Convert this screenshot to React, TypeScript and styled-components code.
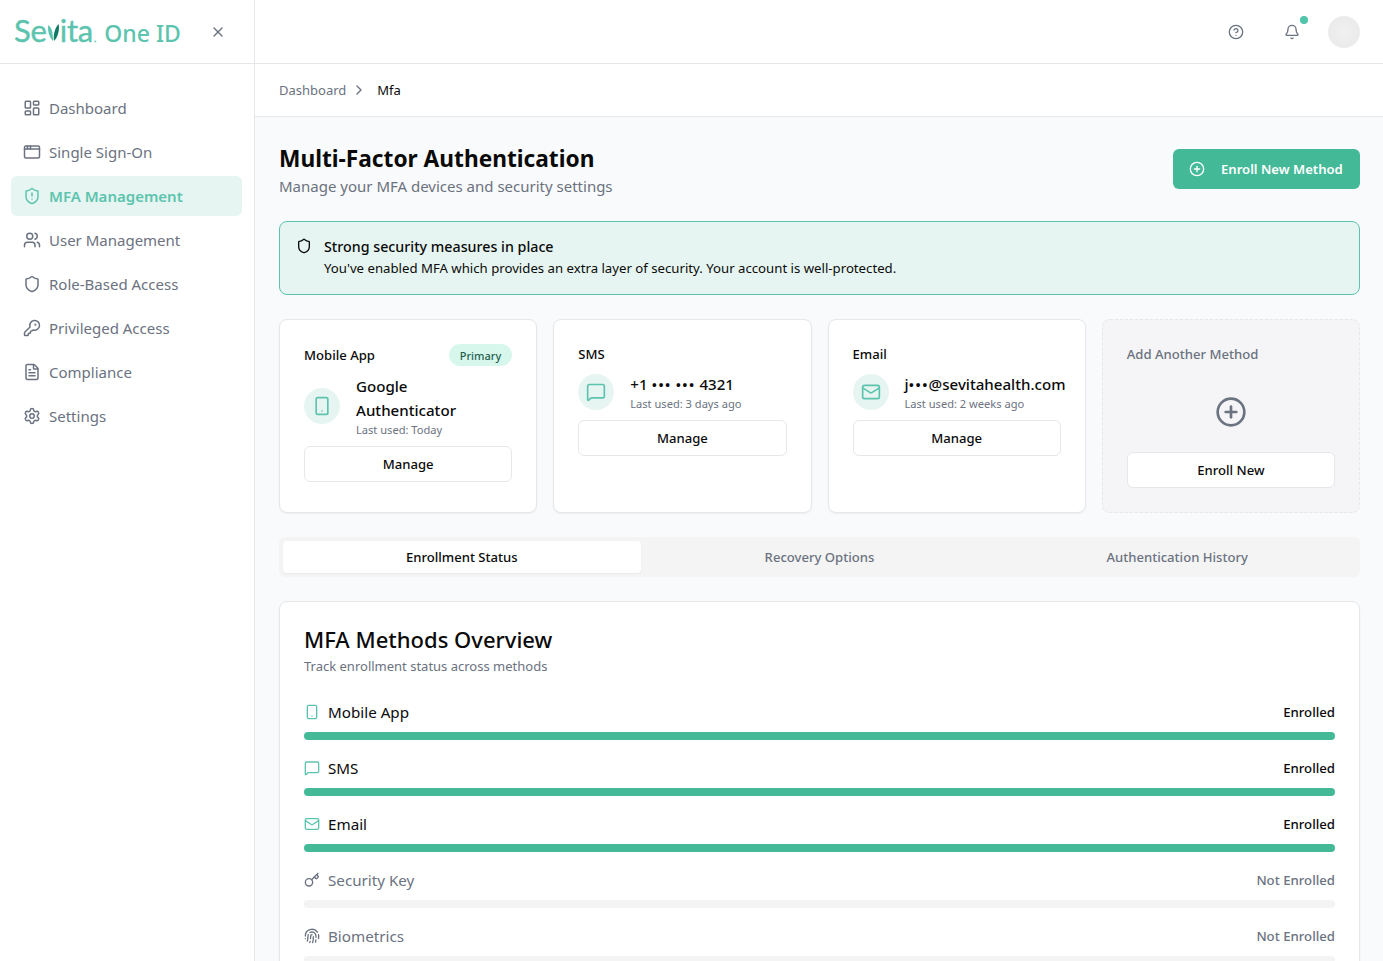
import React from "react";
import styled, { createGlobalStyle } from "styled-components";
import {
  LayoutDashboard, AppWindow, ShieldAlert, Users, Shield, KeyRound, FileText, Settings, X,
  CircleHelp, Bell, CirclePlus, Smartphone, MessageSquare, Mail, Key, Fingerprint, ChevronRight,
} from "lucide-react";

const Global = createGlobalStyle`
  html, body { margin: 0; padding: 0; height: 100%; overflow: hidden; }
  body { font-family: "Noto Sans", "Liberation Sans", sans-serif; color: #0a0a0a; background: #fff; }
  * { box-sizing: border-box; }
`;

const Shell = styled.div`display: flex; width: 100%; height: 961px; overflow: hidden;`;
const Sidebar = styled.aside`width: 255px; flex-shrink: 0; border-right: 1px solid #e5e7eb; background: #fff;`;
const Brand = styled.div`height: 64px; border-bottom: 1px solid #e5e7eb; display: flex; align-items: center; padding: 0 28px 0 14px; justify-content: space-between; color: #5cc4ae;`;
const Logo = styled.div`display: flex; align-items: baseline; gap: 8px; padding-top: 4px;`;
const Sevita = styled.span`font-family: Lato, sans-serif; font-weight: 400; font-size: 31px; letter-spacing: -0.2px; display: inline-flex; align-items: baseline; line-height: 32px; -webkit-text-stroke: 0.4px currentColor;`;
const LogoDot = styled.span`font-size: 10px; margin-left: 1px;`;
const Leaf = styled.svg`width: 13px; height: 19px; margin: 0 0 -1px 0;`;
const OneId = styled.span`font-size: 23px; font-weight: 500; line-height: 32px;`;
const CloseIcon = styled(X)`color: #6b7280;`;
const Nav = styled.nav`display: flex; flex-direction: column; gap: 4px; padding: 24px 12px 0 11px;`;
const NavItem = styled.a<{ $active?: boolean }>`
  height: 40px; display: flex; align-items: center; gap: 8px; padding-left: 12px; border-radius: 6px;
  font-size: 15px; line-height: 24px; color: ${(p) => (p.$active ? "#5cc4ae" : "#6b7280")};
  font-weight: ${(p) => (p.$active ? 600 : 400)};
  background: ${(p) => (p.$active ? "#e6f5f1" : "transparent")};
`;
const Main = styled.div`flex: 1; min-width: 0; display: flex; flex-direction: column; background: #f9fafb;`;
const TopBar = styled.header`height: 64px; flex-shrink: 0; background: #fff; border-bottom: 1px solid #e5e7eb; display: flex; align-items: center; justify-content: flex-end; padding-right: 23px;`;
const IconButton = styled.span`position: relative; width: 40px; height: 40px; display: flex; align-items: center; justify-content: center; color: #6b7280; margin-right: 16px;`;
const Dot = styled.span`position: absolute; width: 8px; height: 8px; border-radius: 50%; background: #4fc4ab; right: 4px; top: 4px;`;
const Avatar = styled.span`width: 32px; height: 32px; border-radius: 50%; background: radial-gradient(circle, #f0f0f0 0%, #e8e8e8 100%);`;
const Crumbs = styled.div`height: 53px; flex-shrink: 0; background: #fff; border-bottom: 1px solid #e5e7eb; display: flex; align-items: center; padding-left: 24px; font-size: 13px; color: #6b7280;`;
const CrumbSep = styled(ChevronRight)`margin: 0 10px 0 5px; color: #6b7280;`;
const CrumbCurrent = styled.span`color: #0a0a0a;`;
const Content = styled.main`padding: 27px 23px 0 24px; display: flex; flex-direction: column;`;
const PageHead = styled.div`display: flex; justify-content: space-between; align-items: flex-start; margin-bottom: 23px;`;
const Title = styled.h1`margin: 0; font-size: 22.7px; line-height: 29px; font-weight: 700;`;
const Sub = styled.p`margin: 1px 0 0; font-size: 15px; line-height: 24px; color: #6b7280;`;
const PrimaryButton = styled.button`
  height: 40px; width: 187px; border: 0; border-radius: 6px; background: #43b997; color: #fff; font: inherit;
  font-size: 13.1px; font-weight: 600; display: flex; align-items: center; gap: 16px; padding: 0 16px; white-space: nowrap; margin-top: 5px;
`;
const Alert = styled.section`height: 74px; border: 1px solid #5cc4ae; border-radius: 8px; background: #e6f5f1; display: flex; padding: 16px; gap: 12px; margin-bottom: 24px;`;
const AlertIcon = styled(Shield)`flex-shrink: 0; color: #0a0a0a;`;
const AlertTitle = styled.div`font-size: 14.25px; font-weight: 500; line-height: 17px;`;
const AlertText = styled.div`font-size: 13.2px; line-height: 20px; margin-top: 3px;`;
const Cards = styled.div`display: grid; grid-template-columns: repeat(4, minmax(0, 1fr)); gap: 16px; margin-bottom: 24px;`;
const Card = styled.div<{ $ghost?: boolean }>`
  border-radius: 8px; padding: 24px; height: 194px; display: flex; flex-direction: column;
  background: ${(p) => (p.$ghost ? "#f5f5f7" : "#fff")};
  border: 1px ${(p) => (p.$ghost ? "dashed" : "solid")} #e5e7eb;
  box-shadow: ${(p) => (p.$ghost ? "none" : "0 1px 2px rgba(0,0,0,.05)")};
`;
const CardHead = styled.div`display: flex; justify-content: space-between; align-items: center; margin-bottom: 8px; min-height: 20px;`;
const CardName = styled.div<{ $muted?: boolean }>`font-size: 13.1px; line-height: 20px; font-weight: 500; color: ${(p) => (p.$muted ? "#6b7280" : "#0a0a0a")};`;
const Badge = styled.span`height: 22px; border-radius: 11px; background: #d8f7ec; color: #1f5f50; font-size: 11px; font-weight: 500; padding: 0 11px; display: flex; align-items: center;`;
const MethodRow = styled.div`display: flex; align-items: center; gap: 16px; margin-bottom: 8px;`;
const IconCircle = styled.span`width: 36px; height: 36px; flex-shrink: 0; border-radius: 50%; background: #e6f5f1; color: #5cc4ae; display: flex; align-items: center; justify-content: center;`;
const MethodName = styled.div`font-size: 15.1px; line-height: 24px; font-weight: 500; max-width: 150px;`;
const Mask = styled.span`letter-spacing: 1px;`;
const Meta = styled.div`font-size: 11.1px; line-height: 16px; color: #6b7280;`;
const OutlineButton = styled.button`
  height: 36px; width: 100%; border: 1px solid #e5e7eb; border-radius: 6px; background: #fff; font: inherit; color: #0a0a0a;
  font-size: 13.1px; font-weight: 500; flex-shrink: 0;
`;
const PlusArea = styled.div`height: 80px; display: flex; align-items: center; justify-content: center; color: #6b7280;`;
const Tabs = styled.div`height: 40px; background: #f4f4f5; border-radius: 6px; padding: 4px; display: grid; grid-template-columns: repeat(3, 1fr); margin-bottom: 24px;`;
const Tab = styled.div<{ $active?: boolean }>`
  display: flex; align-items: center; justify-content: center; font-size: 13.1px; font-weight: 500; border-radius: 4px;
  color: ${(p) => (p.$active ? "#0a0a0a" : "#6b7280")};
  background: ${(p) => (p.$active ? "#fff" : "transparent")};
  box-shadow: ${(p) => (p.$active ? "0 1px 2px rgba(0,0,0,.05)" : "none")};
`;
const Panel = styled.section`background: #fff; border: 1px solid #e5e7eb; border-radius: 8px; padding: 24px; box-shadow: 0 1px 2px rgba(0,0,0,.05);`;
const PanelTitle = styled.h2`margin: 0; font-size: 22px; line-height: 27px; font-weight: 500;`;
const PanelSub = styled.p`margin: 3px 0 24px; font-size: 13px; line-height: 20px; color: #6b7280;`;
const Rows = styled.div`display: flex; flex-direction: column; gap: 16px;`;
const RowHead = styled.div`display: flex; justify-content: space-between; align-items: center; height: 24px; margin-bottom: 8px;`;
const RowLabel = styled.div<{ $on: boolean }>`display: flex; align-items: center; gap: 8px; font-size: 15.2px; color: ${(p) => (p.$on ? "#0a0a0a" : "#6b7280")}; svg { color: ${(p) => (p.$on ? "#5cc4ae" : "#6b7280")}; }`;
const RowState = styled.div<{ $on: boolean }>`font-size: 13.2px; font-weight: 500; color: ${(p) => (p.$on ? "#0a0a0a" : "#6b7280")};`;
const Track = styled.div`height: 8px; border-radius: 4px; background: #f4f4f5; overflow: hidden;`;
const Fill = styled.div`height: 100%; background: #43b997;`;

const navItems = [
  { label: "Dashboard", Icon: LayoutDashboard },
  { label: "Single Sign-On", Icon: AppWindow },
  { label: "MFA Management", Icon: ShieldAlert, active: true },
  { label: "User Management", Icon: Users },
  { label: "Role-Based Access", Icon: Shield },
  { label: "Privileged Access", Icon: KeyRound },
  { label: "Compliance", Icon: FileText },
  { label: "Settings", Icon: Settings },
];

const rows = [
  { label: "Mobile App", Icon: Smartphone, on: true },
  { label: "SMS", Icon: MessageSquare, on: true },
  { label: "Email", Icon: Mail, on: true },
  { label: "Security Key", Icon: Key, on: false },
  { label: "Biometrics", Icon: Fingerprint, on: false },
];

const methods = [
  { name: "Mobile App", badge: true, Icon: Smartphone, value: <>Google Authenticator</>, used: "Last used: Today" },
  { name: "SMS", Icon: MessageSquare, value: <>+1 <Mask>•••</Mask> <Mask>•••</Mask> 4321</>, used: "Last used: 3 days ago" },
  { name: "Email", Icon: Mail, value: <>j<Mask>•••</Mask>@sevitahealth.com</>, used: "Last used: 2 weeks ago" },
];

export default function App() {
  return (
    <>
      <Global />
      <Shell>
        <Sidebar>
          <Brand>
            <Logo>
              <Sevita>
                Se
                <Leaf viewBox="0 0 13 20">
                  <path d="M1 2c4 3 5 9 5 17C2 15 0 8 1 2z" fill="#5cc4ae" />
                  <path d="M12 1c1 7-1 14-5 18-1-7 1-14 5-18z" fill="#0f7a62" />
                </Leaf>
                ita
                <LogoDot>.</LogoDot>
              </Sevita>
              <OneId>One ID</OneId>
            </Logo>
            <CloseIcon size={16} />
          </Brand>
          <Nav>
            {navItems.map(({ label, Icon, active }) => (
              <NavItem key={label} $active={active}>
                <Icon size={18} />
                {label}
              </NavItem>
            ))}
          </Nav>
        </Sidebar>
        <Main>
          <TopBar>
            <IconButton><CircleHelp size={16} /></IconButton>
            <IconButton><Bell size={16} /><Dot /></IconButton>
            <Avatar />
          </TopBar>
          <Crumbs>
            Dashboard
            <CrumbSep size={16} />
            <CrumbCurrent>Mfa</CrumbCurrent>
          </Crumbs>
          <Content>
            <PageHead>
              <div>
                <Title>Multi-Factor Authentication</Title>
                <Sub>Manage your MFA devices and security settings</Sub>
              </div>
              <PrimaryButton><CirclePlus size={16} />Enroll New Method</PrimaryButton>
            </PageHead>
            <Alert>
              <AlertIcon size={16} />
              <div>
                <AlertTitle>Strong security measures in place</AlertTitle>
                <AlertText>You've enabled MFA which provides an extra layer of security. Your account is well-protected.</AlertText>
              </div>
            </Alert>
            <Cards>
              {methods.map(({ name, badge, Icon, value, used }) => (
                <Card key={name}>
                  <CardHead>
                    <CardName>{name}</CardName>
                    {badge && <Badge>Primary</Badge>}
                  </CardHead>
                  <MethodRow>
                    <IconCircle><Icon size={20} /></IconCircle>
                    <div>
                      <MethodName>{value}</MethodName>
                      <Meta>{used}</Meta>
                    </div>
                  </MethodRow>
                  <OutlineButton>Manage</OutlineButton>
                </Card>
              ))}
              <Card $ghost>
                <CardHead><CardName $muted>Add Another Method</CardName></CardHead>
                <PlusArea><CirclePlus size={32} /></PlusArea>
                <OutlineButton>Enroll New</OutlineButton>
              </Card>
            </Cards>
            <Tabs>
              <Tab $active>Enrollment Status</Tab>
              <Tab>Recovery Options</Tab>
              <Tab>Authentication History</Tab>
            </Tabs>
            <Panel>
              <PanelTitle>MFA Methods Overview</PanelTitle>
              <PanelSub>Track enrollment status across methods</PanelSub>
              <Rows>
                {rows.map(({ label, Icon, on }) => (
                  <div key={label}>
                    <RowHead>
                      <RowLabel $on={on}><Icon size={16} />{label}</RowLabel>
                      <RowState $on={on}>{on ? "Enrolled" : "Not Enrolled"}</RowState>
                    </RowHead>
                    <Track><Fill style={{ width: on ? "100%" : "0%" }} /></Track>
                  </div>
                ))}
              </Rows>
            </Panel>
          </Content>
        </Main>
      </Shell>
    </>
  );
}
